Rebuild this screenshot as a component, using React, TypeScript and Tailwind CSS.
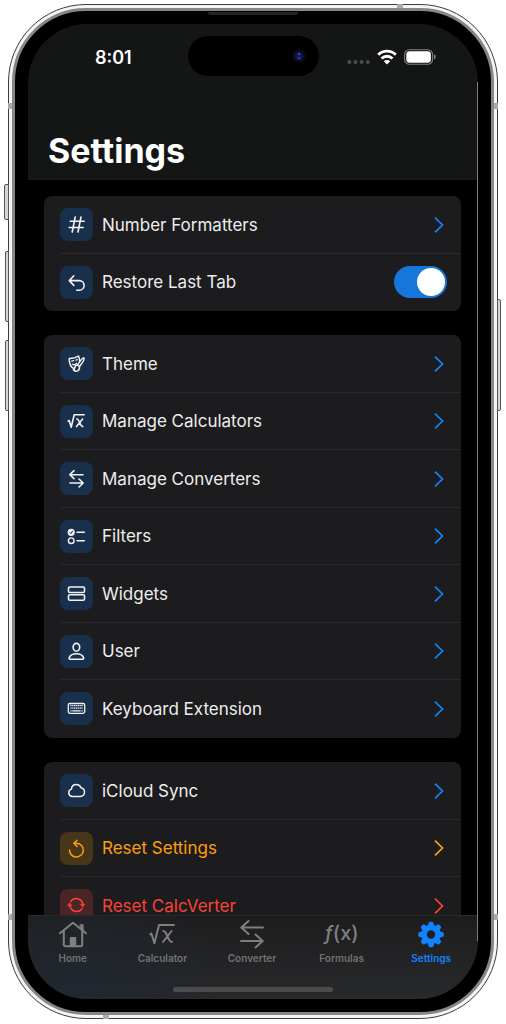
import { useState, type ReactNode } from "react";

type Tone = "blue" | "orange" | "red";

const tones: Record<Tone, { tile: string; icon: string; label: string; chevron: string }> = {
  blue: { tile: "bg-[#19304d]", icon: "text-[#f2f2f2]", label: "text-[#ededed]", chevron: "text-[#1385fb]" },
  orange: { tile: "bg-[#48361b]", icon: "text-[#fd9e0c]", label: "text-[#fd9e0c]", chevron: "text-[#fd9e0c]" },
  red: { tile: "bg-[#4b2425]", icon: "text-[#fb4238]", label: "text-[#fb4238]", chevron: "text-[#fb4238]" },
};

function Glyph({ children, width = 1.6 }: { children: ReactNode; width?: number }) {
  return (
    <svg viewBox="0 0 33 33" className="size-full" fill="none" stroke="currentColor" strokeWidth={width} strokeLinecap="round" strokeLinejoin="round" aria-hidden="true">
      {children}
    </svg>
  );
}

const icons = {
  hash: (
    <Glyph>
      <path d="M15.2 9 12.2 24M21 9l-3 15M10.2 13.3h14M9.2 19.5h14" />
    </Glyph>
  ),
  undo: (
    <Glyph>
      <path d="M13.8 9.8 9.3 14.6l4.5 4.8M9.5 14.6h9.8a4.8 4.8 0 0 1 0 9.6h-2.6" />
    </Glyph>
  ),
  theme: (
    <Glyph width={1.5}>
      <path d="M9.2 11.4c3.400.1 6.600-.6 9.300-2.300q1.300 2.500 1 5M9.200 11.400c-.1 4.700 1.400 8.700 5.200 10.500" />
      <path d="m11.700 14.200 1.900-.5M15.900 13.100l1.400-.4M12.300 17.200c1.500.9 3 .5 4.200-.9" strokeWidth="1.300" />
      <path d="M24 11c-1.500-.6-4.500 3.600-6.500 7.100l2 1.400c2.600-3.300 5.300-7.400 4.500-8.500ZM17.500 18.100c-2.400-.3-2.500 1.600-2.900 2.900-.2.800-.6 1.400-1.200 1.900 2.700 2.600 6.500 1 6.100-3.400" />
    </Glyph>
  ),
  root: (
    <Glyph>
      <path d="m8.200 16.200 1-.7 2 6.800L14.200 9.700h10M16.800 14c2.800 0 3.200 7.600 6 7.600M22.600 14l-6.100 7.600" />
    </Glyph>
  ),
  swap: (
    <Glyph>
      <path d="M23 12.700H10m4-4-4.200 4 4.200 4M10 21h13m-4-4 4.200 4-4.200 4" />
    </Glyph>
  ),
  filters: (
    <Glyph width={1.4}>
      <circle cx="11.200" cy="12.300" r="2.900" fill="currentColor" />
      <path d="m9.900 12.500 1 1.100 1.700-2.500" stroke="#19304d" strokeWidth="1" />
      <circle cx="11.200" cy="20.700" r="2.800" />
      <path d="M17 12.300h7.300M17 20.700h7.300" strokeWidth="1.600" />
    </Glyph>
  ),
  widgets: (
    <Glyph>
      <rect x="8.500" y="10" width="16" height="5.500" rx="1.300" />
      <rect x="8.500" y="17.800" width="16" height="5.500" rx="1.300" />
    </Glyph>
  ),
  user: (
    <Glyph>
      <ellipse cx="16.400" cy="12.300" rx="3.300" ry="3.900" />
      <path d="M10.300 24.300c-1 0-1.400-.7-1.100-1.600.8-2.300 3.600-4 7.200-4s6.400 1.700 7.200 4c.3.900-.1 1.600-1.100 1.600Z" />
    </Glyph>
  ),
  keyboard: (
    <Glyph width={1.3}>
      <rect x="8.300" y="11.500" width="16.400" height="9.800" rx="1.700" />
      <path d="M10.300 13.700h12.400M10.300 16.200h12.400" strokeWidth="1.300" strokeLinecap="butt" strokeDasharray="1.300 .55" />
      <path d="M10.300 18.900h1.300M12.300 18.900h8.300M21.400 18.900h1.300" strokeWidth="1.300" strokeLinecap="butt" />
    </Glyph>
  ),
  cloud: (
    <Glyph width={1.5}>
      <path d="M12.300 22.500a3.800 3.800 0 0 1-.9-7.400c.3-2.600 2.300-4.500 4.900-4.500 2.200 0 3.900 1.200 4.700 3.100a4.300 4.300 0 0 1 3.500 4.400 4.200 4.200 0 0 1-4.300 4.400Z" />
    </Glyph>
  ),
  reset: (
    <Glyph width={1.5}>
      <path d="M9.500 17.900a6.900 6.900 0 1 0 6.900-6.700h-2.500M17 8.300l-3.200 2.900 3.300 3.200" />
    </Glyph>
  ),
  cycle: (
    <Glyph width={1.4}>
      <path d="M10.600 12.700a6.700 6.700 0 0 1 12.300 2.600M22.200 19.300a6.700 6.700 0 0 1-12.300-2.600" />
      <path d="m21 15.200 3.800 0-1.900 2.600ZM8 16.800h3.800l-1.900-2.600Z" fill="currentColor" strokeWidth=".8" />
    </Glyph>
  ),
};

type Item = { label: string; icon: keyof typeof icons; tone?: Tone; toggle?: boolean };

const groups: Item[][] = [
  [
    { label: "Number Formatters", icon: "hash" },
    { label: "Restore Last Tab", icon: "undo", toggle: true },
  ],
  [
    { label: "Theme", icon: "theme" },
    { label: "Manage Calculators", icon: "root" },
    { label: "Manage Converters", icon: "swap" },
    { label: "Filters", icon: "filters" },
    { label: "Widgets", icon: "widgets" },
    { label: "User", icon: "user" },
    { label: "Keyboard Extension", icon: "keyboard" },
  ],
  [
    { label: "iCloud Sync", icon: "cloud" },
    { label: "Reset Settings", icon: "reset", tone: "orange" },
    { label: "Reset CalcVerter", icon: "cycle", tone: "red" },
  ],
];

function Row({ item }: { item: Item }) {
  const [on, setOn] = useState(true);
  const tone = tones[item.tone ?? "blue"];
  const body = (
    <>
      <span className={`size-[33px] shrink-0 rounded-lg ${tone.tile} ${tone.icon}`}>{icons[item.icon]}</span>
      <span className={`flex-1 text-left text-[17px] leading-6 ${tone.label}`}>{item.label}</span>
    </>
  );
  return (
    <li className="group/row pl-4 odd:h-[58px] even:h-[57px]">
      <div className="h-full border-b border-[#29292b] group-last/row:border-transparent">
        {item.toggle ? (
          <label className="flex size-full cursor-pointer items-center gap-[9px] pr-[14px]">
            {body}
            <input
              type="checkbox"
              role="switch"
              checked={on}
              onChange={() => setOn(!on)}
              className="flex h-8 w-[53px] appearance-none items-center rounded-full bg-[#3a3a3c] p-0.5 before:size-7 before:rounded-full before:bg-white checked:justify-end checked:bg-[#1676da]"
            />
          </label>
        ) : (
          <button type="button" className="flex size-full items-center gap-[9px] pr-4">
            {body}
            <svg viewBox="0 0 12 18" className={`h-[18px] w-3 ${tone.chevron}`} fill="none" stroke="currentColor" strokeWidth="1.700" aria-hidden="true">
              <path d="m2 1.700 7.500 7.300L2 16.300" />
            </svg>
          </button>
        )}
      </div>
    </li>
  );
}

function TabGlyph({ children }: { children: ReactNode }) {
  return (
    <svg viewBox="0 0 30 30" className="size-[30px]" fill="none" stroke="currentColor" strokeWidth="2" strokeLinecap="round" strokeLinejoin="round" aria-hidden="true">
      {children}
    </svg>
  );
}

const tabs: { label: string; icon: ReactNode }[] = [
  {
    label: "Home",
    icon: (
      <TabGlyph>
        <path d="M2 13.300 14.300 3.200a1 1 0 0 1 1.400 0L28 13.300M5.800 11v13.500a1.700 1.700 0 0 0 1.700 1.700h15a1.700 1.700 0 0 0 1.700-1.700V11" />
        <path d="M22.300 4.500h3v6.300l-3-2.500Z" fill="currentColor" strokeWidth=".5" />
        <path d="M11.800 26v-8q0-1 1-1h4.400q1 0 1 1v8Z" fill="currentColor" stroke="none" />
      </TabGlyph>
    ),
  },
  {
    label: "Calculator",
    icon: (
      <TabGlyph>
        <path d="m3.200 14.300 1.200-.8 3 9.700L12 5h15M16.300 11c4.300 0 4.200 11 8.600 11M24.600 11l-8.600 11" />
      </TabGlyph>
    ),
  },
  {
    label: "Converter",
    icon: (
      <TabGlyph>
        <path d="M26 7.500H4.500m7-6.500-7.200 6.500 7.200 6.500M4 21h21.500m-7-6.500 7.200 6.500-7.200 6.500" />
      </TabGlyph>
    ),
  },
  {
    label: "Formulas",
    icon: (
      <span className="flex h-[30px] items-center pb-1 text-[20px] leading-none font-medium" aria-hidden="true">
        <i>ƒ</i>(x)
      </span>
    ),
  },
  {
    label: "Settings",
    icon: (
      <TabGlyph>
        <mask id="gear-hole">
          <path d="M0 0h30v30H0Z" fill="#fff" stroke="none" />
          <circle cx="15" cy="14.500" r="4.200" fill="#000" stroke="none" />
        </mask>
        <g mask="url(#gear-hole)" fill="currentColor" stroke="none">
          <circle cx="15" cy="14.500" r="9.700" />
          {[0, 45, 90, 135].map((angle) => (
            <path key={angle} d="M12.900 2q2.100-.5 4.200 0l1.300 4.500v16L17.100 27q-2.100.5-4.200 0l-1.300-4.500v-16Z" transform={`rotate(${angle} 15 14.500)`} />
          ))}
        </g>
      </TabGlyph>
    ),
  },
];

function StatusBar() {
  return (
    <div className="grid h-10 grid-cols-[1fr_131px_1fr] items-center">
      <time className="pt-[3px] pl-[11px] text-center text-[18px] leading-6 font-semibold text-white">8:01</time>
      <div className="flex h-10 items-center justify-end rounded-full bg-black pr-[13px]">
        <svg viewBox="0 0 14 14" className="size-3.5" aria-hidden="true">
          <circle cx="7" cy="7" r="6.500" fill="#0b0b1c" />
          <circle cx="7" cy="7" r="4" fill="#14164f" />
          <circle cx="7" cy="5" r="1.200" fill="#3b46b8" />
          <circle cx="7" cy="9.300" r="1.100" fill="#2b50a8" />
        </svg>
      </div>
      <div className="flex items-center justify-center gap-[7px] pt-0.5 pr-[14px]">
        <svg viewBox="0 0 23 16" className="h-4 w-[23px]" fill="#4b4d4c" aria-hidden="true">
          <circle cx="2.300" cy="13" r="2" />
          <circle cx="8.500" cy="13" r="2" />
          <circle cx="14.700" cy="13" r="2" />
          <circle cx="20.900" cy="13" r="2" />
        </svg>
        <svg viewBox="0 0 20 16" className="h-4 w-5" fill="none" stroke="#fff" strokeWidth="2.800" aria-hidden="true">
          <path d="M1.200 5.800a12.600 12.600 0 0 1 17.600 0M4.500 9.500a7.900 7.900 0 0 1 11 0" />
          <path d="m10 15.400-3.200-3.200a4.600 4.600 0 0 1 6.400 0Z" fill="#fff" stroke="none" />
        </svg>
        <svg viewBox="0 0 32 16" className="h-4 w-8" aria-hidden="true">
          <rect x=".6" y=".7" width="28" height="14.600" rx="4.800" fill="none" stroke="#7d7f7e" strokeWidth="1.100" />
          <rect x="2.300" y="2.300" width="24.600" height="11.400" rx="3.300" fill="#fff" />
          <path d="M30 5.300q1.800.8 1.800 2.700T30 10.700Z" fill="#7d7f7e" />
        </svg>
      </div>
    </div>
  );
}

const hardwareButtons = [
  "-left-1 top-[180px] h-9 w-[5px] rounded-l-xs",
  "-left-[3px] top-[247px] h-[71px] w-1 rounded-l-xs",
  "-left-[3px] top-[336px] h-[71px] w-1 rounded-l-xs",
  "-right-[3px] top-[295px] h-[112px] w-1 rounded-r-xs",
];

const antennaBands = [
  "left-0 top-[99px] h-1.5 w-1",
  "right-0 top-[99px] h-1.5 w-1",
  "left-0 bottom-[99px] h-1.5 w-1",
  "right-0 bottom-[99px] h-1.5 w-1",
  "right-[95px] top-0 h-1 w-1.5",
  "left-[95px] bottom-0 h-1 w-1.5",
];

export default function App() {
  const [active, setActive] = useState("Settings");
  return (
    <div className="flex h-screen bg-white px-2 pt-1 pb-[5px] font-['Inter',sans-serif]">
      <div className="relative flex flex-1">
        {hardwareButtons.map((place) => (
          <span key={place} className={`absolute border border-[#555] bg-[#d4d6d6] ${place}`} />
        ))}
        <div className="flex flex-1 rounded-[78px] border border-[#3c3c3c] bg-[#f6f5f3] p-[3px]">
          <div className="flex flex-1 rounded-[74px] border-[3px] border-[#858687] bg-black p-[13px]">
            <div className="flex min-w-0 flex-1 flex-col overflow-hidden rounded-[59px] bg-black">
              <header className="border-b border-[#1b1c1c] bg-[#141615] pt-3 pb-[7px]">
                <StatusBar />
                <h1 className="mt-[54px] pl-5 text-[34px] leading-[42px] font-bold text-white">Settings</h1>
              </header>
              <main className="flex min-h-0 flex-1 flex-col gap-6 overflow-hidden pt-4 pr-[17px] pl-4">
                {groups.map((items) => (
                  <ul key={items[0].label} className="shrink-0 overflow-hidden rounded-lg bg-[#1c1c1e]">
                    {items.map((item) => (
                      <Row key={item.label} item={item} />
                    ))}
                  </ul>
                ))}
              </main>
              <nav className="border-t border-[#2a2a2b] bg-[radial-gradient(circle_at_12%_100%,#20272f,transparent_35%),linear-gradient(#1d1d1e,#28292b)] pt-1 pb-[7px]">
                <div className="grid grid-cols-5 pr-0.5">
                  {tabs.map((tab) => (
                    <button
                      key={tab.label}
                      type="button"
                      onClick={() => setActive(tab.label)}
                      aria-current={active === tab.label ? "page" : undefined}
                      className={`flex flex-col items-center ${active === tab.label ? "text-[#0f84fe]" : "text-[#7f7f80]"}`}
                    >
                      {tab.icon}
                      <span className={`text-[10px] leading-4 font-semibold ${active === tab.label ? "" : "text-[#727273]"}`}>{tab.label}</span>
                    </button>
                  ))}
                </div>
                <div className="mx-auto mt-[21px] h-[5px] w-40 rounded-full bg-[#4c4c4d]" />
              </nav>
            </div>
          </div>
        </div>
        {antennaBands.map((place) => (
          <span key={place} className={`absolute bg-[#a9aaaa] ${place}`} />
        ))}
        <span className="absolute top-2 left-1/2 h-[3px] w-[90px] -translate-x-1/2 rounded-b-full bg-[#232424]" />
        <span className="absolute top-[78px] right-5 bottom-[78px] w-px bg-[#7c7d7d]" />
      </div>
    </div>
  );
}
